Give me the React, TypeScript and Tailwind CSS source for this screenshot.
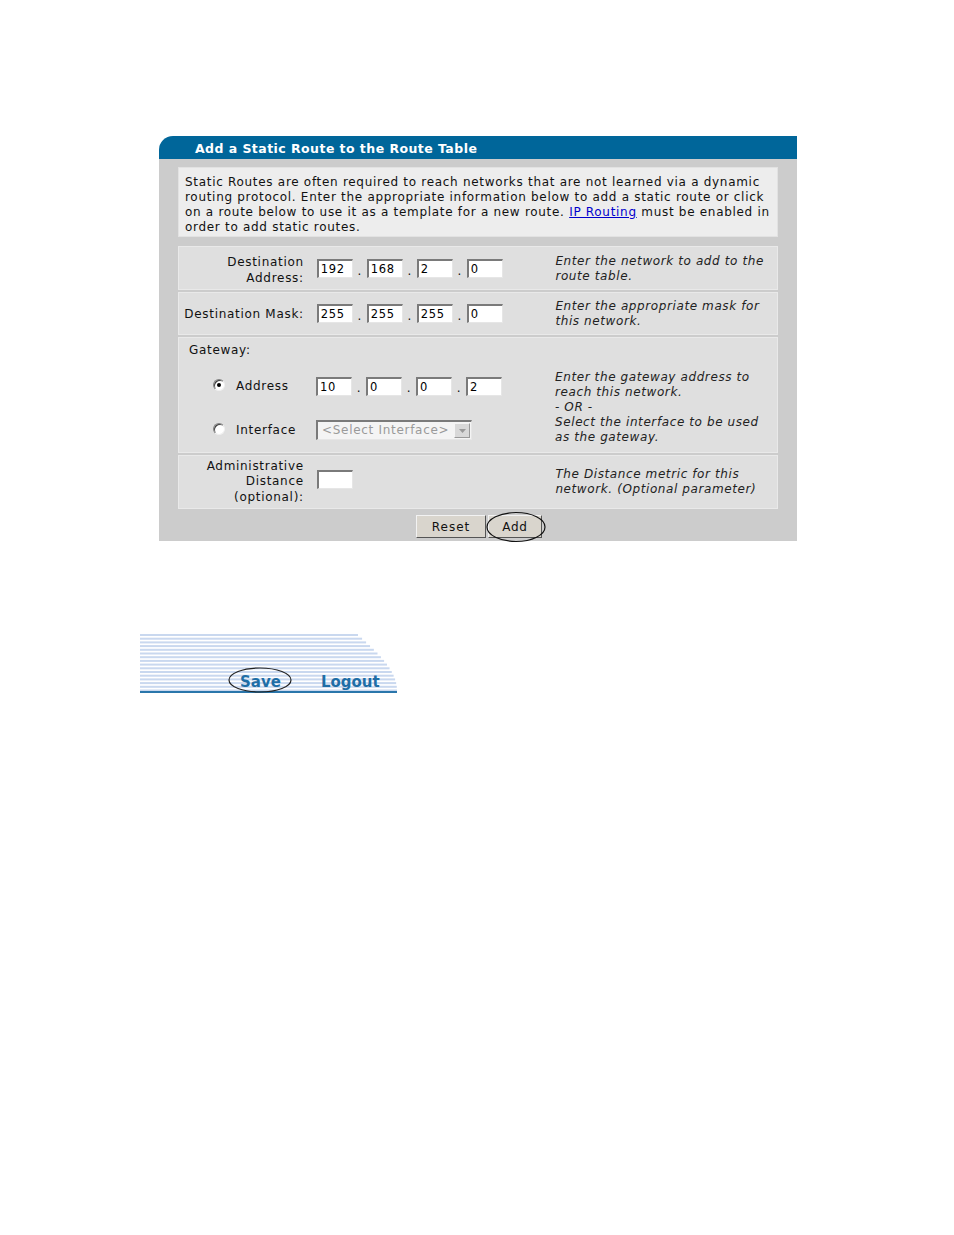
const font = { fontFamily: '"DejaVu Sans", Verdana, sans-serif' }

function IpBox({ value }: { value: string }) {
  return (
    <div className="w-[36px] h-[19px] bg-white border-t-2 border-l-2 border-b border-r border-t-[#7a7a7a] border-l-[#7a7a7a] border-b-[#e6e6e6] border-r-[#e6e6e6] pl-[2px] text-[11.5px] leading-[16px] text-black">
      {value}
    </div>
  )
}

function IpRow({ parts }: { parts: string[] }) {
  return (
    <div className="flex items-center">
      {parts.map((p, i) => (
        <div key={i} className="flex items-center">
          {i > 0 && <span className="w-[14px] text-center text-[12px] leading-none pt-[4px]">.</span>}
          <IpBox value={p} />
        </div>
      ))}
    </div>
  )
}

function Radio({ checked }: { checked?: boolean }) {
  return (
    <div className="w-[12px] h-[12px] rounded-full bg-white border border-t-[#808080] border-l-[#808080] border-b-[#f0f0f0] border-r-[#f0f0f0] flex items-center justify-center shadow-[inset_1px_1px_0_#404040]">
      {checked && <div className="w-[4px] h-[4px] rounded-full bg-black" />}
    </div>
  )
}

function Help({ children, className = '' }: { children: React.ReactNode; className?: string }) {
  return <div className={'w-[222px] italic text-[12px] leading-[15px] text-[#222] whitespace-nowrap tracking-[0.6px] ' + className}>{children}</div>
}

function Stripes() {
  // light blue lines, each a little longer than the one above
  const lines = Array.from({ length: 16 }, (_, i) => {
    const y = 2 + i * 3.7
    const t = i / 15
    const len = 218 + 39 * Math.sin((t * Math.PI) / 2)
    return { y, len }
  })
  return (
    <svg className="absolute inset-0" width="257" height="62" viewBox="0 0 257 62">
      {lines.map((l, i) => (
        <rect key={i} x="0" y={l.y} width={l.len} height="2" fill="#c9d8ef" />
      ))}
      <rect x="0" y="59" width="257" height="2" fill="#2a76ab" />
    </svg>
  )
}

export default function App() {
  return (
    <div className="min-h-[1235px] bg-white text-[#111] tracking-[0.7px]" style={font}>
      <div className="pt-[136px] pl-[159px]">
        <div className="w-[638px]">
          {/* header */}
          <div className="h-[23px] bg-[#00669a] rounded-tl-[14px] pl-[36px] pt-[3px] flex items-center">
            <span className="text-white font-bold text-[12.5px] tracking-[0.45px]">Add a Static Route to the Route Table</span>
          </div>

          <div className="bg-[#cccccc] px-[19px] pt-[8px]">
            {/* intro */}
            <div className="h-[70px] bg-[#ededed] border border-[#e2e2e2] px-[6px] pt-[7px] text-[12px] leading-[15px] whitespace-nowrap">
              Static Routes are often required to reach networks that are not learned via a dynamic
              <br />
              routing protocol. Enter the appropriate information below to add a static route or click
              <br />
              on a route below to use it as a template for a new route.{' '}
              <span className="text-[#0000cc] underline">IP Routing</span> must be enabled in
              <br />
              order to add static routes.
            </div>

            <div className="mt-[9px] flex flex-col gap-[2px] text-[12px] leading-[15px]">
              {/* destination address */}
              <div className="h-[44px] bg-[#dfdfdf] border border-[#e9e9e9] flex items-center">
                <div className="w-[126px] text-right pr-[1px] leading-[16px] pt-[4px]">
                  Destination
                  <br />
                  Address:
                </div>
                <div className="ml-[12px] w-[239px] pt-[1px]">
                  <IpRow parts={['192', '168', '2', '0']} />
                </div>
                <Help className="pt-[2px]">
                  Enter the network to add to the
                  <br />
                  route table.
                </Help>
              </div>

              {/* mask */}
              <div className="h-[43px] bg-[#dfdfdf] border border-[#e9e9e9] flex items-center">
                <div className="w-[126px] text-right pr-[1px] whitespace-nowrap pt-[1px]">Destination Mask:</div>
                <div className="ml-[12px] w-[239px]">
                  <IpRow parts={['255', '255', '255', '0']} />
                </div>
                <Help className="pt-[1px]">
                  Enter the appropriate mask for
                  <br />
                  this network.
                </Help>
              </div>

              {/* gateway */}
              <div className="h-[116px] bg-[#dfdfdf] border border-[#e9e9e9] flex">
                <div className="w-[377px] flex flex-col">
                  <div className="pl-[10px] pt-[5px]">Gateway:</div>
                  <div className="flex items-center mt-[18px] h-[20px]">
                    <div className="ml-[34px] -mt-[2px]">
                      <Radio checked />
                    </div>
                    <div className="w-[80px] ml-[11px] pt-[1px]">Address</div>
                    <IpRow parts={['10', '0', '0', '2']} />
                  </div>
                  <div className="flex items-center mt-[24px] h-[20px]">
                    <div className="ml-[34px] -mt-[2px]">
                      <Radio />
                    </div>
                    <div className="w-[80px] ml-[11px] pt-[1px]">Interface</div>
                    <div className="w-[156px] h-[20px] bg-[#f4f4f4] border-t-2 border-l-2 border-b border-r border-t-[#7a7a7a] border-l-[#7a7a7a] border-b-[#e6e6e6] border-r-[#e6e6e6] flex items-center">
                      <span className="flex-1 pl-[4px] text-[12px] text-[#9a9a9a] whitespace-nowrap">&lt;Select Interface&gt;</span>
                      <div className="w-[16px] h-[15px] mr-[1px] bg-[#d8d8d8] border border-t-[#f4f4f4] border-l-[#f4f4f4] border-b-[#999] border-r-[#999] flex items-center justify-center">
                        <svg width="7" height="4" viewBox="0 0 7 4">
                          <path d="M0 0h7L3.5 4z" fill="#999" />
                        </svg>
                      </div>
                    </div>
                  </div>
                </div>
                <div className="pt-[32px]">
                  <Help>
                    Enter the gateway address to
                    <br />
                    reach this network.
                    <br />
                    - OR -
                    <br />
                    Select the interface to be used
                    <br />
                    as the gateway.
                  </Help>
                </div>
              </div>

              {/* admin distance */}
              <div className="h-[54px] bg-[#dfdfdf] border border-[#e9e9e9] flex items-center">
                <div className="w-[126px] text-right pr-[1px] leading-[15.5px]">
                  Administrative
                  <br />
                  Distance
                  <br />
                  (optional):
                </div>
                <div className="ml-[12px] w-[239px] mb-[5px]">
                  <IpBox value="" />
                </div>
                <Help>
                  The Distance metric for this
                  <br />
                  network. (Optional parameter)
                </Help>
              </div>
            </div>

            {/* buttons */}
            <div className="h-[32px] pt-[6px] flex items-start justify-center pl-[2px] gap-[2px] text-[12px]">
              <div className="w-[70px] h-[23px] bg-[#d9d5cd] border border-t-[#f2f2f2] border-l-[#f2f2f2] border-b-[#555] border-r-[#555] flex items-center justify-center tracking-[1px]">
                Reset
              </div>
              <div className="relative w-[54px] h-[23px] bg-[#d9d5cd] border border-t-[#f2f2f2] border-l-[#f2f2f2] border-b-[#555] border-r-[#555] flex items-center justify-center">
                Add
                <svg className="absolute -left-[3px] -top-[5px]" width="62" height="32" viewBox="0 0 62 32">
                  <ellipse cx="30" cy="16" rx="29" ry="14.5" fill="none" stroke="#111" strokeWidth="1.2" />
                </svg>
              </div>
            </div>
          </div>
        </div>
      </div>

      {/* save / logout strip */}
      <div className="mt-[91px] ml-[140px] relative w-[257px] h-[62px]">
        <Stripes />
        <div className="relative h-full flex items-end pb-[1px] pl-[100px] gap-[40px] text-[15px] font-bold text-[#1f6ea6] tracking-normal">
          <div className="relative">
            Save
            <svg className="absolute -left-[13px] -top-[6px]" width="66" height="30" viewBox="0 0 66 30">
              <ellipse cx="33" cy="15" rx="31" ry="12" fill="none" stroke="#222" strokeWidth="1.2" />
            </svg>
          </div>
          <div>Logout</div>
        </div>
      </div>
    </div>
  )
}
